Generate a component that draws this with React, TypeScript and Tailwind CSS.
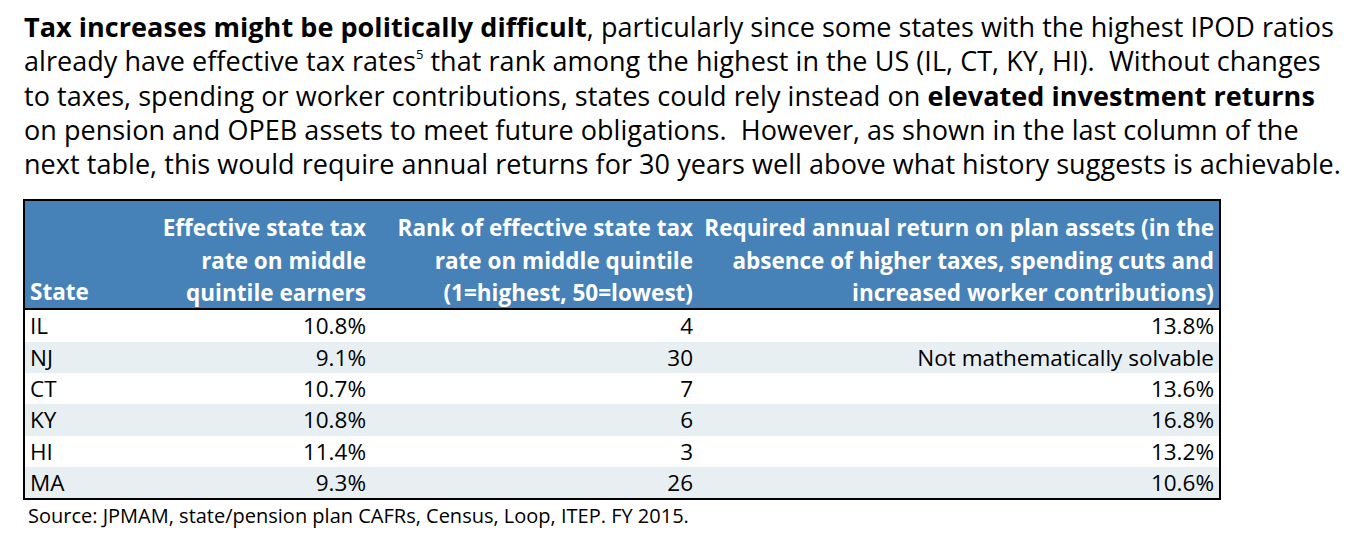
import React from "react";

const rows = [
  ["IL", "10.8%", "4", "13.8%"],
  ["NJ", "9.1%", "30", "Not mathematically solvable"],
  ["CT", "10.7%", "7", "13.6%"],
  ["KY", "10.8%", "6", "16.8%"],
  ["HI", "11.4%", "3", "13.2%"],
  ["MA", "9.3%", "26", "10.6%"],
];

export default function App() {
  return (
    <div
      className="w-[1348px] h-[534px] bg-white text-black overflow-hidden"
      style={{ fontFamily: '"Open Sans", "Noto Sans", sans-serif' }}
    >
      <div className="pl-[24px] pt-[10px] text-[27px] leading-[34.3px] tracking-[0.05px]">
        <div className="whitespace-nowrap">
          <b className="font-bold">Tax increases might be politically difficult</b>, particularly since some states with the highest IPOD ratios
        </div>
        <div className="whitespace-nowrap">
          already have effective tax rates<sup className="text-[13px] top-[-12px]">5</sup> that rank among the highest in the US (IL, CT, KY, HI).&nbsp; Without changes
        </div>
        <div className="whitespace-nowrap">
          to taxes, spending or worker contributions, states could rely instead on <b className="font-bold">elevated investment returns</b>
        </div>
        <div className="whitespace-nowrap">
          on pension and OPEB assets to meet future obligations.&nbsp; However, as shown in the last column of the
        </div>
        <div className="whitespace-nowrap">
          next table, this would require annual returns for 30 years well above what history suggests is achievable.
        </div>
      </div>

      <div className="ml-[23px] mt-[18px] w-[1198px] border-2 border-black">
        <div className="grid grid-cols-[118px_223px_327px_1fr] h-[107px] bg-[#4682b8] text-white font-bold text-[22.5px] leading-[32.5px] pt-[11px]">
          <div className="flex items-end pl-[5px] pb-[1px]">State</div>
          <div className="text-right">
            Effective state tax
            <br />
            rate on middle
            <br />
            quintile earners
          </div>
          <div className="text-right">
            Rank of effective state tax
            <br />
            rate on middle quintile
            <br />
            (1=highest, 50=lowest)
          </div>
          <div className="text-right pr-[5px]">
            Required annual return on plan assets (in the
            <br />
            absence of higher taxes, spending cuts and
            <br />
            increased worker contributions)
          </div>
        </div>
        <div className="h-[2px] bg-black" />
        {rows.map((r, i) => (
          <div
            key={r[0]}
            className={`grid grid-cols-[118px_223px_327px_1fr] text-[22.5px] h-[31.3px] leading-[31.3px] ${
              i % 2 === 1 ? "bg-[#e8eff3]" : "bg-white"
            }`}
          >
            <div className="pl-[5px]">{r[0]}</div>
            <div className="text-right">{r[1]}</div>
            <div className="text-right">{r[2]}</div>
            <div className="text-right pr-[5px]">{r[3]}</div>
          </div>
        ))}
      </div>
      <div className="pl-[28px] pt-[3px] text-[20px] leading-[26px] whitespace-nowrap">
        Source: JPMAM, state/pension plan CAFRs, Census, Loop, ITEP. FY 2015.
      </div>
    </div>
  );
}
